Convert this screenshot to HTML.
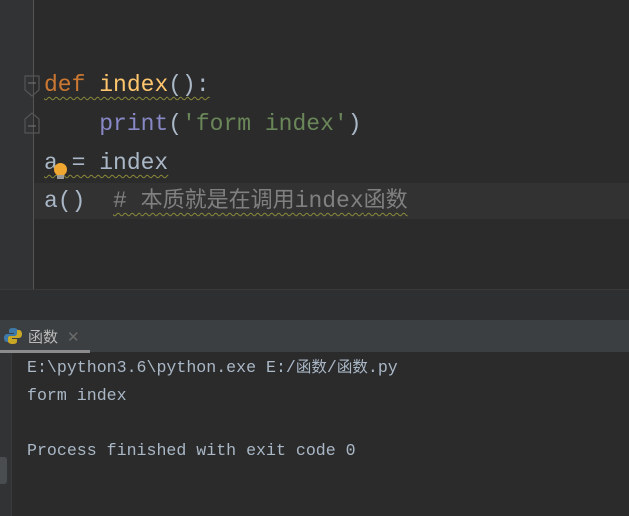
<!DOCTYPE html><html><head><meta charset="utf-8"><style>
body{margin:0;width:629px;height:516px;background:#2b2b2b;overflow:hidden;position:relative;font-family:"Liberation Mono","Noto Sans CJK SC",monospace}
.a{position:absolute}
.code{font-size:23px;white-space:pre;color:#a9b7c6;line-height:39px}
.w{text-decoration:underline wavy #8a8a3a;text-decoration-thickness:1px;text-underline-offset:5px}
.con{font-size:16.6px;color:#a9b7c6;white-space:pre;line-height:22px}
.cj{font-size:22px}
.cc{font-size:15.5px}
</style></head><body>
<div class="a" style="left:0;top:0;width:33px;height:289px;background:#313335"></div>
<div class="a" style="left:33px;top:0;width:1px;height:289px;background:#555"></div>
<div class="a" style="left:34px;top:183px;width:595px;height:36px;background:#323232"></div>
<div class="a" style="left:0;top:289px;width:629px;height:1px;background:#3a3a3a"></div>
<div class="a" style="left:0;top:290px;width:629px;height:30px;background:#2d2f31"></div>
<svg class="a" style="left:22px;top:74px" width="22" height="62"><path d="M3 2h14v14l-7 6l-7-6z" fill="none" stroke="#555" stroke-width="1.2"/><path d="M6 9h8" stroke="#777"/><path d="M3 59h14v-14l-7-6l-7 6z" fill="none" stroke="#555" stroke-width="1.2"/><path d="M6 52h8" stroke="#777"/></svg>
<div class="a code" style="left:44px;top:66px"><span class="w"><span style="color:#cc7832">def</span> <span style="color:#ffc66d">index</span>():</span></div>
<div class="a code" style="left:44px;top:105px">    <span style="color:#8888c6">print</span>(<span style="color:#6a8759">'form index'</span>)</div>
<div class="a code" style="left:44px;top:144px"><span class="w">a = index</span></div>
<div class="a" style="left:54px;top:163px;width:13px;height:13px;border-radius:50%;background:#f0a732"></div>
<div class="a" style="left:57px;top:175px;width:7px;height:4px;background:#999"></div>
<div class="a code" style="left:44px;top:182px">a()  <span class="w" style="color:#808080"># <span class="cj">本质就是在调用</span>index<span class="cj">函数</span></span></div>
<div class="a" style="left:0;top:320px;width:629px;height:32px;background:#3c3f41"></div>
<div class="a" style="left:0;top:350px;width:90px;height:3px;background:#8c8c8c"></div>
<svg class="a" style="left:4px;top:327px" width="18" height="18"><path d="M9 1c-4 0-4 2-4 3v2h5v1H3c-2 0-3 2-3 4s1 4 3 4h2v-3c0-2 1-3 3-3h4c1 0 2-1 2-2V4c0-2-2-3-5-3z" fill="#3d7aab"/><path d="M9 17c4 0 4-2 4-3v-2H8v-1h7c2 0 3-2 3-4s-1-4-3-4h-2v3c0 2-1 3-3 3H6c-1 0-2 1-2 2v3c0 2 2 3 5 3z" fill="#c9a826"/></svg>
<div class="a" style="left:28px;top:326px;font-size:15px;color:#bbb;font-family:'Noto Sans CJK SC',sans-serif">函数</div>
<div class="a" style="left:67px;top:328px;font-size:15px;color:#6a6a6a;font-family:'DejaVu Sans',sans-serif">✕</div>
<div class="a" style="left:0;top:353px;width:11px;height:163px;background:#313335"></div>
<div class="a" style="left:11px;top:353px;width:1px;height:163px;background:#3a3a3a"></div>
<div class="a" style="left:0;top:457px;width:7px;height:27px;background:#4a4d50;border-radius:0 3px 3px 0"></div>
<div class="a con" style="left:27px;top:357px">E:\python3.6\python.exe E:/<span class="cc">函数</span>/<span class="cc">函数</span>.py</div>
<div class="a con" style="left:27px;top:385px">form index</div>
<div class="a con" style="left:27px;top:440px">Process finished with exit code 0</div>
</body></html>
